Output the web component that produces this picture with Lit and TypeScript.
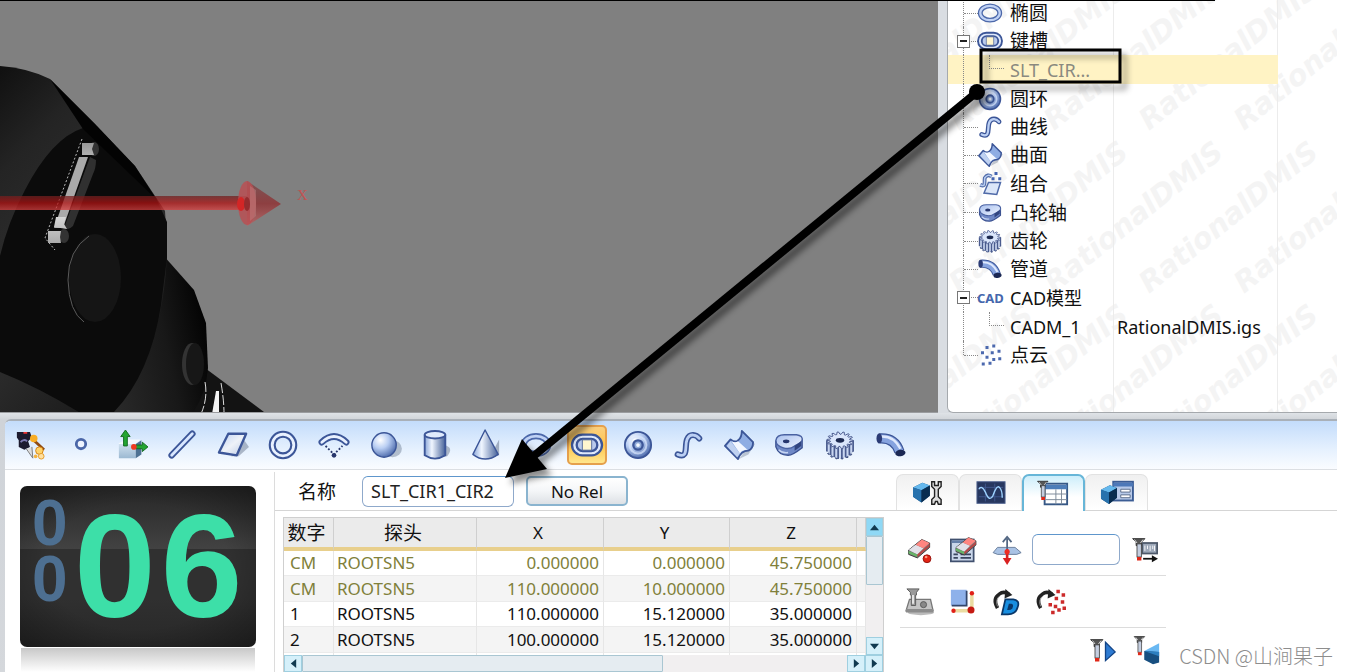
import { LitElement, html, svg, css } from "lit";
import { customElement, state } from "lit/decorators.js";
import { classMap } from "lit/directives/class-map.js";

const cog = (cx: number, cy: number) =>
  "M" + Array.from({ length: 56 }, (_, i) => {
    const a = (i / 56) * Math.PI * 2;
    const far = i % 4 < 2;
    return `${(cx + Math.cos(a) * (far ? 14 : 10.5)).toFixed(1)} ${(cy + Math.sin(a) * (far ? 9 : 6.5)).toFixed(1)}`;
  }).join("L") + "Z";

const probe = svg`<path d="M3 3H17L13 7V11H7V7Z" fill="#555" stroke="#222"/><path d="M5 4L8 8M15 4L12 8" stroke="#eee"/><rect x="8" y="9" width="5" height="15" fill="#c4cee0" stroke="#444"/><rect x="8" y="24" width="5" height="4" fill="#e02818"/>`;
const eraser = svg`<path d="M3 17L18 5L27 9V14L13 26L3 22Z" fill="#777" stroke="#333"/><path d="M3 17L11 11L20 15L13 22Z" fill="#e2e0e8"/><path d="M11 11L18 5L27 9L20 15Z" fill="#ff8580"/><path d="M3 18L13 22V25L3 21Z" fill="#66b466"/><path d="M13 22L27 10V13L13 25Z" fill="#b44"/>`;
const cube = svg`<path d="M2 10L12 5L20 8V19L11 26L2 20Z" fill="#174d7c"/><path d="M2 10L12 5L20 8L11 13Z" fill="#65b8ed"/><path d="M2 10L11 13V26L2 20Z" fill="#2872ad"/><path d="M11 13L20 8V19L11 26Z" fill="#092d50"/>`;
const turn = svg`<path d="M6 24Q0 13 8 8Q13 4 19 8" fill="none" stroke="#222" stroke-width="4"/><path d="M15 2L23 9L14 13Z" fill="#222"/><path d="M6 22Q3 14 9 10" fill="none" stroke="#999" stroke-width="1"/>`;

const icons: Record<string, unknown> = {
  probeSetup: svg`<path d="M2 2H16L18 8L14 12L16 18L10 21L4 18V11L2 8Z" fill="#1c1b2f"/><path d="M9 3H13" stroke="#e33" stroke-width="2"/><path d="M6 13Q9 9 13 12" stroke="#7b79b0" fill="none" stroke-width="2"/><path d="M12 20L19 30L18 18" fill="#ddd" stroke="#777"/><path d="M18 9L31 21" stroke="#8f4b12" stroke-width="3"/><circle cx="20" cy="9" r="4" fill="#f8ad25"/><circle cx="26" cy="22" r="4" fill="#ffd36a" stroke="#d58210"/><circle cx="28" cy="28" r="3" fill="#ffe0a0" stroke="#e39a26"/><circle cx="22" cy="28" r="2" fill="#f4b33f"/>`,
  point: svg`<circle cx="16" cy="15" r="5" fill="#eef4ff" stroke="#4a66a8" stroke-width="3"/>`,
  edgePoint: svg`<path d="M2 14L10 10H25L20 15H2Z" fill="#f4f8fc"/><path d="M2 15H20V30H2Z" fill="url(#box)"/><path d="M20 15L26 11V26L20 30Z" fill="#4f7293"/><path d="M9 0L14 7H11V17H7V7H4Z" fill="#23a531" stroke="#116a20"/><path d="M33 18L27 23V20H20V16H27V13Z" fill="#23a531" stroke="#116a20"/><circle cx="18" cy="18" r="3" fill="#f03a20"/>`,
  line: svg`<path d="M5 27L27 4" stroke="#3c5698" stroke-width="7" stroke-linecap="round"/><path d="M5 27L27 4" stroke="#d9e7ff" stroke-width="3" stroke-linecap="round"/>`,
  plane: svg`<path d="M28 11L33 18L22 28H14Z" fill="#5f6d85" opacity=".45"/><path d="M11 4H30L20 27L1 24Z" fill="url(#sheet)" stroke="#3c5698" stroke-width="2.500" stroke-linejoin="round"/>`,
  circle: svg`<circle cx="16" cy="16" r="11.500" fill="none" stroke="#3c5698" stroke-width="7.500"/><circle cx="16" cy="16" r="11.500" fill="none" stroke="#e9f1ff" stroke-width="3"/>`,
  arc: svg`<path d="M3 13Q16 1 29 13" fill="none" stroke="#3c5698" stroke-width="7" stroke-linecap="round"/><path d="M3 13Q16 1 29 13" fill="none" stroke="#e9f1ff" stroke-width="3" stroke-linecap="round"/><path d="M7 17L16 26L25 17" fill="none" stroke="#27366b" stroke-width="2" stroke-dasharray="2 2"/><circle cx="16" cy="27" r="2.500" fill="#27366b"/>`,
  sphere: svg`<ellipse cx="24" cy="20" rx="10" ry="9" fill="#5f6d85" opacity=".4"/><circle cx="15" cy="16" r="13" fill="url(#ball)" stroke="#3c5698" stroke-width="1.500"/>`,
  cylinder: svg`<path d="M25 16Q37 18 29 28L18 30Z" fill="#5f6d85" opacity=".45"/><path d="M5 5V27Q16 34 27 27V5" fill="url(#tube)" stroke="#3c5698" stroke-width="2"/><ellipse cx="16" cy="5" rx="11" ry="4" fill="#dfeafc" stroke="#3c5698" stroke-width="2"/>`,
  cone: svg`<path d="M30 10V27L20 29Z" fill="#5f6d85" opacity=".5"/><path d="M15 0L29 26Q15 36 2 26Z" fill="url(#tube)" stroke="#3c5698" stroke-width="1.500" stroke-linejoin="round"/>`,
  ellipse: svg`<ellipse cx="16" cy="16" rx="13" ry="9.500" fill="none" stroke="#4c68aa" stroke-width="6.500"/><ellipse cx="16" cy="16" rx="13" ry="9.500" fill="none" stroke="#c0d2f5" stroke-width="3"/>`,
  slot: svg`<rect x="0" y="5" width="32" height="22" rx="11" fill="#dfe9fb" stroke="#3c5698" stroke-width="2.500"/><rect x="5" y="9.500" width="22" height="13" rx="6.500" fill="#b9caec" stroke="#3c5698" stroke-width="2.500"/><rect x="11" y="10.500" width="10" height="11" fill="#fff6cf" stroke="#53699c"/>`,
  torus: svg`<circle cx="16" cy="16" r="14" fill="url(#ball)" stroke="#3c5698" stroke-width="2"/><circle cx="16" cy="16" r="9" fill="none" stroke="#d9e6fc" stroke-width="2" opacity=".7"/><circle cx="16" cy="16" r="5" fill="#8fa9d8" stroke="#3c5698" stroke-width="2.500"/><circle cx="16" cy="16" r="2" fill="#f3f8ff"/>`,
  curve: svg`<path d="M5 26C17 31 12 17 15 10C18 3 25 5 28 9" fill="none" stroke="#3c5698" stroke-width="6.500" stroke-linecap="round"/><path d="M5 26C17 31 12 17 15 10C18 3 25 5 28 9" fill="none" stroke="#bcd0f4" stroke-width="3" stroke-linecap="round"/>`,
  surface: svg`<path d="M26 26L33 15L30 12L16 31Z" fill="#5f6d85" opacity=".35"/><path d="M1 17L7 10Q12 14 15 11Q19 8 19 1L31 13Q31 20 26 22Q18 22 15 31Z" fill="#8fadE3" stroke="#3c5698" stroke-width="2" stroke-linejoin="round"/><path d="M8 12Q12 14 15 12L25 21Q19 21 17 25Z" fill="#f3f7ff"/><path d="M3 17L7 12L17 25L14 29Z" fill="#bfd1f1"/>`,
  group: svg`<path d="M3 17C11 21 8 13 9 8Q13 2 18 6" fill="none" stroke="#4f6aa8" stroke-width="5"/><path d="M3 17C11 21 8 13 9 8Q13 2 18 6" fill="none" stroke="#b9cdf0" stroke-width="2"/><path d="M14 14H30L25 30L8 28Z" fill="#dbe6f8" stroke="#4f6aa8" stroke-width="2"/><path d="M22 0H26V4H22ZM18 7H22V11H18ZM27 7H31V11H27Z" fill="#4363b0"/>`,
  cam: svg`<path d="M2 12V18Q5 27 15 27Q20 27 30 19V10Z" fill="#6f88c6" stroke="#3c5291" stroke-width="1.500"/><path d="M2 11Q3 5 11 5H24Q31 6 30 11Q29 14 22 17Q17 21 10 19Q2 17 2 11Z" fill="url(#face)" stroke="#4a62a2" stroke-width="1.500"/><path d="M5 21Q9 25 15 24" stroke="#c5d4f2" stroke-width="1.500" fill="none"/><path d="M22 22L29 17V12L22 17Z" fill="#32457f"/><ellipse cx="13" cy="12" rx="3.500" ry="2" fill="#26366f"/>`,
  gear: svg`<path d=${cog(16, 22)} fill="#6f86be" stroke="#3b4a75"/><path d="M2 11H30V22Q24 30 16 30Q8 30 2 22Z" fill="#c9d6f0"/><path d="M2 11V23M6 15V27M10 17V29M14 18V31M18 18V31M22 17V29M26 15V27M30 11V23" stroke="#4a5b8e" stroke-width="1.800"/><path d=${cog(16, 11)} fill="#dbe6fb" stroke="#44548a"/><ellipse cx="16" cy="11" rx="4.500" ry="2.500" fill="#1c2950"/>`,
  pipe: svg`<path d="M4 9Q20 8 25 23" fill="none" stroke="#3c5698" stroke-width="11"/><path d="M4 9Q20 8 25 23" fill="none" stroke="#86a3df" stroke-width="8.500"/><path d="M5 7Q19 6 26 20" fill="none" stroke="#dfe9fd" stroke-width="2.500"/><ellipse cx="3.500" cy="9" rx="3" ry="5.500" fill="#2b3b75"/><ellipse cx="26" cy="24.500" rx="5.500" ry="3.500" fill="#1b2854" transform="rotate(-8 26 24.500)"/>`,
  cloud: svg`<path d="M10 4h4v4h-4zM19 2h4v4h-4zM4 11h4v4h-4zM17 11h4v4h-4zM26 9h4v4h-4zM10 17h4v4h-4zM19 20h4v4h-4zM27 19h4v4h-4zM5 26h4v4h-4zM14 25h4v4h-4z" fill="#4c69ae"/>`,
  cubeWrench: svg`<g transform="translate(-2 0)">${cube}</g><path d="M20 4V9L23 12V20L20 23V28H23L24 25H26L27 28H30V23L27 20V12L30 9V4H27V8H23V4Z" fill="#ddd" stroke="#222" stroke-width="1.500"/>`,
  wave: svg`<rect x="1" y="4" width="30" height="23" fill="#27375f" stroke="#4e628f"/><path d="M3 10H29M3 20H29M10 6V25M20 6V25" stroke="#40578d"/><path d="M3 12Q6 7 10 15Q14 26 18 19Q22 7 25 10Q28 13 28 21" fill="none" stroke="#9fd3ff" stroke-width="1.500"/>`,
  probeTable: svg`<rect x="6" y="5" width="24" height="22" fill="#fff" stroke="#365785" stroke-width="2"/><path d="M6 6H30V11H6Z" fill="#4d7db8"/><path d="M7 16H30M7 22H30M18 11V27M24 11V27" stroke="#7b8796"/><g transform="translate(-4 0) scale(.8)">${probe}</g>`,
  cubeForm: svg`<rect x="12" y="4" width="21" height="20" fill="#b7c9e9" stroke="#3b5c94" stroke-width="2"/><path d="M12 5H33V9H12Z" fill="#4d78b8"/><path d="M20 12H30V15H20ZM20 18H30V21H20Z" fill="#fff" stroke="#596b88"/><g transform="translate(-3 3) scale(.95)">${cube}</g>`,
  eraseOne: svg`<g transform="translate(0 -1)">${eraser}</g><circle cx="24" cy="26" r="4.500" fill="#e32414" stroke="#8e0d08"/><circle cx="23" cy="24" r="1.500" fill="#ff9b82"/>`,
  eraseAll: svg`<rect x="1" y="4" width="26" height="25" fill="#c9d6ea" stroke="#40506e" stroke-width="2"/><path d="M2 5H26V8H2Z" fill="#6680aa"/><path d="M4 21H9M12 21H24M4 25H9M12 25H24" stroke="#39455e" stroke-width="2"/><g transform="translate(4 -3) scale(.95)">${eraser}</g>`,
  planeShift: svg`<path d="M-1 19L4 13H24L31 19L26 21H4Z" fill="#a9c2e4" stroke="#5f7594"/><path d="M15 16V3M10 7L15 1L20 7" fill="none" stroke="#536783" stroke-width="2"/><path d="M15 15V28" stroke="#d92020" stroke-width="3"/><path d="M10 25H20L15 33Z" fill="#d92020"/><circle cx="15" cy="18" r="3" fill="#ed2d23"/>`,
  probeRuler: svg`<rect x="14" y="8" width="17" height="12" fill="#9da8b9" stroke="#4d5869" stroke-width="2"/><path d="M17 11V17M20 11V15M23 11V17M26 11V15M28 11V17" stroke="#fff"/><path d="M15 26H27" stroke="#111" stroke-width="2"/><path d="M25 22L32 26L25 30Z" fill="#111"/>${probe}`,
  probeBlock: svg`<ellipse cx="17" cy="28" rx="15" ry="3" fill="#bbb"/><path d="M4 13H28L31 26H0Z" fill="#c4c4c4" stroke="#777" stroke-width="1.500"/><path d="M0 24H31V28H0Z" fill="#8c8c8c"/><circle cx="20" cy="19" r="3.500" fill="#888" stroke="#555"/><path d="M1 1H15L12 5V8H11V20H6V8H5V5Z" fill="#999" stroke="#555"/><path d="M8 8V18" stroke="#eee" stroke-width="2"/>`,
  corner: svg`<rect x="1" y="2" width="18" height="18" fill="#8eb1ea"/><path d="M19 3V20H2" fill="none" stroke="#33466b" stroke-width="2"/><path d="M25 6V26H4" fill="none" stroke="#eadca2" stroke-width="4"/><circle cx="25" cy="6" r="2.500" fill="#e02018"/><circle cx="4" cy="26" r="2.500" fill="#e02018"/><circle cx="24" cy="25" r="4" fill="#c51a12"/>`,
  turnDatum: svg`<g transform="translate(-2 -1)">${turn}</g><path d="M13 13H22Q30 14 27 22Q25 30 16 30H9Z" fill="#188ee0" stroke="#0a3768" stroke-width="2"/><path d="M17 18H20Q23 19 21 23Q19 26 15 25Z" fill="#0a3768"/>`,
  turnPoints: svg`<g transform="translate(-3 -1)">${turn}</g><path d="M21 2h4v4h-4zM27 6h4v4h-4zM19 10h4v4h-4zM12 17h4v4h-4zM26 14h4v4h-4zM18 19h4v4h-4zM28 21h4v4h-4zM15 26h4v4h-4zM22 23h4v4h-4z" fill="#cc2a2a"/>`,
  probePlay: svg`${probe}<path d="M20 6L31 17L20 27Z" fill="#2e7bd2" stroke="#124486" stroke-width="1.500"/>`,
  probeCube: svg`<g transform="translate(0 -3) scale(.85)">${probe}</g><path d="M14 16L31 7V17L22 20Z" fill="#69b8f2"/><path d="M14 16L31 17V29L24 31L14 26Z" fill="#174f80"/><path d="M14 16L31 17V22Z" fill="#2c7fc0"/>`,
};

const icon = (name: string, cls = "icon") =>
  html`<svg class=${cls} viewBox="0 0 32 32" aria-hidden="true">${icons[name]}</svg>`;

interface Node { label: string; icon?: string; open?: boolean; child?: boolean; value?: string; cad?: boolean; selected?: boolean; last?: boolean }

const nodes: Node[] = [
  { label: "椭圆", icon: "ellipse" },
  { label: "键槽", icon: "slot", open: true },
  { label: "SLT_CIR...", child: true, selected: true },
  { label: "圆环", icon: "torus" },
  { label: "曲线", icon: "curve" },
  { label: "曲面", icon: "surface" },
  { label: "组合", icon: "group" },
  { label: "凸轮轴", icon: "cam" },
  { label: "齿轮", icon: "gear" },
  { label: "管道", icon: "pipe" },
  { label: "CAD模型", cad: true, open: true },
  { label: "CADM_1", child: true, value: "RationalDMIS.igs" },
  { label: "点云", icon: "cloud", last: true },
];

const features = [
  ["probeSetup", "测头"], ["point", "点"], ["edgePoint", "边界点"], ["line", "直线"], ["plane", "平面"],
  ["circle", "圆"], ["arc", "圆弧"], ["sphere", "球"], ["cylinder", "圆柱"], ["cone", "圆锥"],
  ["ellipse", "椭圆"], ["slot", "键槽"], ["torus", "圆环"], ["curve", "曲线"], ["surface", "曲面"],
  ["cam", "凸轮轴"], ["gear", "齿轮"], ["pipe", "管道"],
];

const rows = [
  ["CM", "ROOTSN5", "0.000000", "0.000000", "45.750000"],
  ["CM", "ROOTSN5", "110.000000", "10.000000", "45.750000"],
  ["1", "ROOTSN5", "110.000000", "15.120000", "35.000000"],
  ["2", "ROOTSN5", "100.000000", "15.120000", "35.000000"],
  ["", "", "", "", ""],
];

const marks = [131, 294, 457].flatMap((y) => [-2, -1, 0, 1, 2].map((k) => [106 + k * 95, y]));

@customElement("app-root")
export class AppRoot extends LitElement {
  @state() private feature = "slot";
  @state() private tab = "probeTable";

  static styles = css`
    :host {
      display: flex; flex-direction: column; position: relative; min-height: 100vh; overflow: hidden;
      background: #fff; color: #111;
      font-family: "Noto Sans", "Noto Sans CJK SC", sans-serif; font-size: 17px;
    }
    * { box-sizing: border-box; }
    button { font: inherit; color: inherit; border: 0; padding: 0; background: none; display: grid; place-items: center; cursor: pointer; }
    .defs { position: absolute; width: 0; height: 0; }
    .icon { width: 30px; height: 30px; overflow: visible; }
    .top { display: flex; flex: 1; min-height: 413px; margin-right: 10px; background: #d9dde2; }
    .scene { flex: 1; background: #808080; display: block; min-width: 0; height: auto; border-bottom: 1px solid #9a9c9f; }
    .axis { font: 15px "Liberation Serif", serif; fill: #c25353; }
    .panel { position: relative; flex: none; width: 390px; margin-left: 9px; background: #fff; border-left: 1px solid #a5a9ad; border-bottom: 1px solid #a5a9ad; border-bottom-left-radius: 6px; overflow: hidden; }
    .marks { position: absolute; inset: 0; width: 100%; height: 100%; }
    .marks text { font: italic bold 29px "DejaVu Sans", sans-serif; fill: #f4f4f4; }
    .cols { position: absolute; inset: 0; display: grid; grid-template-columns: 166px 164px 1fr; }
    .cols i { border-right: 1px solid #ececec; }
    .cols i:last-child { border: 0; }
    .tree { position: relative; margin: -1px 0 0; padding: 0; list-style: none; display: grid; grid-auto-rows: 28px 28px 29px 29px; font-size: 18px; }
    .node { display: grid; grid-template-columns: 16px 14px 30px 1fr; width: 330px; align-items: center; white-space: nowrap; }
    .node.selected { background: #fff3c4; color: #8a8a80; }
    .rail { align-self: stretch; border-right: 1px dotted #888; }
    .last .rail { height: 14px; align-self: start; }
    .stem { border-top: 1px dotted #888; }
    .child .stem { visibility: hidden; }
    .node .icon { width: 24px; height: 24px; }
    .elbow { width: 15px; height: 14px; margin-left: 11px; align-self: start; border-left: 1px dotted #888; border-bottom: 1px dotted #888; }
    .fold { position: relative; z-index: 1; width: 13px; height: 13px; margin: 0 -7px 0 9px; border: 1px solid #777; background: #fff; }
    .fold::before { content: ""; width: 7px; height: 2px; background: #222; }
    .open .rail, .open .fold { grid-area: 1 / 1; }
    .cad { font: bold 16px "Open Sans", sans-serif; font-stretch: 75%; font-family: "Noto Sans", sans-serif; font-size: 13px; margin-left: -1px; color: #4567ad; }
    .text { display: grid; grid-template-columns: 107px 1fr; line-height: 24px; padding-left: 2px; }
    .zh { font-size: 19px; }
    .bottom { padding: 6px 10px 0 0; background: linear-gradient(#dfe3e7, #cfd3d8 7px, #d5d8dc); background-size: calc(100% - 10px) 100%; background-repeat: no-repeat; }
    .work { margin-left: 5px; border-top: 2px solid #a9b0b8; border-top-left-radius: 6px; background: #fff; overflow: hidden; }
    .tools { border-bottom: 1px solid #dcdfe3; background: linear-gradient(#c3dcfb, #e6f1fe 60%, #fafcff); }
    .toolgrid { display: grid; grid-template-columns: repeat(18, 1fr); max-width: 911px; height: 48px; place-items: center; }
    .tool { width: 40px; height: 40px; border-radius: 5px; border: 1px solid transparent; }
    .tool.on { border: 2px solid #e5a04c; background: linear-gradient(#fbd080, #ffc54c 50%, #ffe68d); }
    .body { display: grid; grid-template-columns: 270px 608px 1fr; }
    .left { padding: 14px 18px 0 15px; border-right: 1px solid #dcdcdc; margin-top: 2px; }
    .clock { display: flex; height: 161px; padding-left: 12px; overflow: hidden; border-radius: 7px; font-family: "Liberation Sans", sans-serif; font-weight: bold; background: radial-gradient(ellipse at center, transparent 55%, #0007 115%), linear-gradient(#262626, #424242 39%, #303030 39%, #303030 70%, #282828); }
    .small { width: 42px; font-size: 64px; line-height: 56px; color: #4d6f91; padding-top: 9px; }
    .small span, .big span { display: block; }
    .big { display: flex; gap: 5px; font-size: 147px; line-height: 161px; color: #3ddfa8; }
    .shade { height: 24px; margin: 1px 1px 0; background: linear-gradient(#c8c8c8, #fff); }
    .name { display: flex; align-items: center; height: 41px; padding: 2px 0 0 23px; border-bottom: 1px solid #d5d5d5; }
    .name label { width: 64px; font-size: 19px; }
    .field { border: 1px solid #8fa9cb; border-top-color: #5e96cc; border-radius: 6px; background: #fff; font: inherit; color: #222; outline: 0; min-width: 0; }
    .name .field { width: 152px; height: 31px; padding: 0 8px; font-size: 18px; }
    .rel { margin-left: 12px; width: 102px; height: 30px; border: 2px solid #8ab4cf; border-radius: 5px; background: linear-gradient(#fff, #f4f6f8 50%, #dde1e5); }
    .grid { display: grid; grid-template-columns: 1fr 17px; margin: 6px 0 0 8px; width: 601px; border: 1px solid #cfcfcf; border-bottom: 0; }
    .view { height: 137px; overflow: hidden; }
    table { width: 100%; table-layout: fixed; border-collapse: separate; border-spacing: 0; line-height: 22px; }
    th { height: 33px; padding: 0 4px 0 0; font-weight: normal; background: #ebebeb; border-right: 1px solid #cfcfcf; border-bottom: 4px solid #e8cf8c; }
    td { height: 25px; padding: 0 4px 0 3px; border-right: 1px solid #e6e6e6; border-bottom: 1px solid #ebebeb; }
    td:first-child { padding-left: 6px; }
    tr:nth-child(even) td { height: 26px; background: #f4f4f4; }
    .cm { color: #80803a; }
    .num { text-align: right; }
    .vbar { display: grid; grid-template-rows: 18px 49px 1fr 18px; background: #f1eff0; }
    .hbar { grid-column: 1 / -1; display: grid; grid-template-columns: 18px 361px 1fr 18px 18px; height: 17px; background: #f1eff0; }
    .thumb { border: 1px solid #a9c6d2; background: #e5ecf1; border-radius: 1px; }
    .arrow { border: 1px solid #9fcfe0; background: #d5f0fa; }
    .arrow.hot { background: #8fd8f5; }
    .arrow svg { width: 9px; height: 9px; fill: #103a50; }
    .tabs { display: flex; align-items: end; height: 41px; padding: 0 0 0 13px; border-bottom: 1px solid #d5d5d5; }
    .tab { width: 63px; height: 36px; border: 1px solid #e2e2e2; border-bottom: 0; border-radius: 7px 7px 0 0; background: linear-gradient(#f0f0f0, #fff); }
    .tab.on { height: 37px; margin-bottom: -1px; border: 2px solid #67b6d8; border-bottom: 0; background: linear-gradient(#cdeefb, #fff 60%); }
    .acts { width: 266px; margin-left: 17px; }
    .line { display: flex; align-items: center; gap: 4px; height: 52px; border-bottom: 1px solid #dcdcdc; }
    .line:first-child { height: 65px; padding-top: 13px; }
    .line:last-child { justify-content: end; border: 0; height: 46px; }
    .act { width: 40px; height: 40px; flex: none; }
    .act .icon { width: 28px; height: 28px; }
    .line .field { width: 88px; height: 31px; flex: none; }
    .note { position: absolute; inset: 0; width: 100%; height: 100%; pointer-events: none; }
    .credit { position: absolute; right: 14px; bottom: 4px; font: 20px/28px "Noto Sans CJK SC", sans-serif; font-weight: 300; color: #8d8d8d; }
  `;

  private defs() {
    return html`<svg class="defs" aria-hidden="true"><defs>
      <linearGradient id="tube"><stop offset="0" stop-color="#8aa6d8"/><stop offset=".35" stop-color="#f0f6ff"/><stop offset="1" stop-color="#466299"/></linearGradient>
      <linearGradient id="sheet" x2="1" y2="1"><stop offset="0" stop-color="#bcd0f3"/><stop offset=".5" stop-color="#eef2f8"/><stop offset="1" stop-color="#b9c9e6"/></linearGradient>
      <linearGradient id="face" x2="1" y2="1"><stop offset="0" stop-color="#a9c0ee"/><stop offset="1" stop-color="#eef4ff"/></linearGradient>
      <linearGradient id="box" x2="0" y2="1"><stop offset="0" stop-color="#cfe0ee"/><stop offset="1" stop-color="#9cb9d2"/></linearGradient>
      <radialGradient id="ball" cx=".35" cy=".3" r=".75"><stop offset="0" stop-color="#fff"/><stop offset=".45" stop-color="#b9cef3"/><stop offset="1" stop-color="#4a68aa"/></radialGradient>
    </defs></svg>`;
  }

  private scene() {
    return html`<svg class="scene" role="img" aria-label="CAD">
      <defs>
        <linearGradient id="hull" x1="0" y1="0" x2=".5" y2="1"><stop offset="0" stop-color="#101010"/><stop offset=".25" stop-color="#242424"/><stop offset=".6" stop-color="#303030"/><stop offset="1" stop-color="#1c1c1c"/></linearGradient>
        <linearGradient id="hub" x1="0" y1=".7" x2="1" y2=".4"><stop offset="0" stop-color="#2b2b2b"/><stop offset=".6" stop-color="#181818"/><stop offset="1" stop-color="#020202"/></linearGradient>
        <linearGradient id="shaft" x2="0" y2="1"><stop offset="0" stop-color="#702020" stop-opacity=".75"/><stop offset=".5" stop-color="#b01212" stop-opacity=".75"/><stop offset="1" stop-color="#d64040" stop-opacity=".75"/></linearGradient>
        <linearGradient id="tip" x2="0" y2="1"><stop offset="0" stop-color="#7c5555"/><stop offset=".5" stop-color="#8d3f41"/><stop offset="1" stop-color="#b06a6a"/></linearGradient>
        <linearGradient id="pin" x2="0" y2="1"><stop offset="0" stop-color="#999"/><stop offset=".5" stop-color="#fff"/><stop offset="1" stop-color="#aaa"/></linearGradient>
      </defs>
      <path d="M205 368L264 412V414H190Z" fill="#131313"/>
      <path d="M163 255L194 290L206 323L208 368Q206 395 192 414H100Z" fill="url(#hub)"/>
      <path d="M205 382Q208 398 201 414M221 383Q224 400 224 414" stroke="#ddd" stroke-dasharray="10 2" fill="none"/>
      <path d="M216 391H219V414H212Z" fill="#f4f4f4"/>
      <path d="M0 66Q28 68 50 79L95 124L135 166L155 196L165 211L167 245Q166 350 112 414H0Z" fill="url(#hull)"/>
      <path d="M83 128Q52 138 25 190Q8 222 0 256V372Q40 388 82 414H112Q150 376 161 305L167 258V222L156 198Z" fill="#0b0b0b"/>
      <path d="M50 79L95 124L135 166L157 200L83 129Z" fill="#030303"/>
      <ellipse cx="95" cy="278" rx="26" ry="44" fill="#151515"/>
      <path d="M89 236Q68 250 68 280Q69 312 84 322" stroke="#5a5a5a" fill="none"/>
      <ellipse cx="192" cy="364" rx="10" ry="21" fill="#333"/><ellipse cx="195" cy="364" rx="9" ry="21" fill="#171717"/>
      <path d="M90 157L96 160Q96 168 93 174L73 226Q68 231 64 228Z" fill="#303030"/>
      <path d="M79 157H88L63 228H54Z" fill="#aaa"/>
      <path d="M82 139L45 238L55 250" stroke="#bbb" stroke-dasharray="2 2" fill="none"/>
      <ellipse cx="94" cy="149" rx="5" ry="7" fill="#333"/><ellipse cx="64" cy="236" rx="5" ry="7" fill="#333"/>
      <path d="M82 143H94L92 149L94 155H82ZM56 217H66L64 224L67 229L54 227ZM48 231H61L60 237L61 243H48Z" fill="url(#pin)"/>
      <rect y="196" width="248" height="14" fill="url(#shaft)"/>
      <path d="M247 181L281 204L247 226Z" fill="url(#tip)"/>
      <ellipse cx="247" cy="203" rx="9" ry="22" fill="#b85053" opacity=".85"/>
      <path d="M250 186L256 190V216L250 221Z" fill="#b98080" opacity=".5"/>
      <ellipse cx="241" cy="204" rx="4" ry="7" fill="#d32626"/><ellipse cx="247" cy="204" rx="3" ry="7" fill="#942c2e"/>
      <text class="axis" x="297" y="200">X</text>
    </svg>`;
  }

  private node(n: Node) {
    const zh = /^[\u4e00-\u9fff]/.test(n.label);
    return html`<li class=${classMap({ node: true, open: !!n.open, child: !!n.child, selected: !!n.selected, last: !!n.last })}>
      <span class="rail"></span>${n.open ? html`<button class="fold" aria-label="折叠"></button>` : ""}<span class="stem"></span>
      ${n.child ? html`<span class="elbow"></span>` : n.cad ? html`<span class="cad">CAD</span>` : icon(n.icon!)}
      <span class="text"><span class=${zh ? "zh" : ""}>${n.label}</span>${n.value ? html`<span>${n.value}</span>` : ""}</span>
    </li>`;
  }

  private arrow(d: string, label: string, hot = false) {
    return html`<button class=${classMap({ arrow: true, hot })} aria-label=${label}><svg viewBox="0 0 10 10"><path d=${d}/></svg></button>`;
  }

  private act(name: string, label: string) {
    return html`<button class="act" aria-label=${label}>${icon(name)}</button>`;
  }

  render() {
    return html`${this.defs()}
      <main class="top">
        ${this.scene()}
        <section class="panel">
          <svg class="marks" aria-hidden="true">${marks.map(([x, y]) => svg`<text transform="translate(${x} ${y}) rotate(-39)">RationalDMIS</text>`)}</svg>
          <div class="cols"><i></i><i></i><i></i></div>
          <ul class="tree">${nodes.map((n) => this.node(n))}</ul>
        </section>
      </main>
      <section class="bottom"><div class="work">
        <nav class="tools"><div class="toolgrid">
          ${features.map(([id, label]) => html`<button class=${classMap({ tool: true, on: id === this.feature })} aria-label=${label} @click=${() => (this.feature = id)}>${icon(id)}</button>`)}
        </div></nav>
        <div class="body">
          <div class="left">
            <div class="clock">
              <div class="small"><span>0</span><span>0</span></div>
              <div class="big"><span>0</span><span>6</span></div>
            </div>
            <div class="shade"></div>
          </div>
          <div class="mid">
            <div class="name"><label for="fname">名称</label><input id="fname" class="field" value="SLT_CIR1_CIR2"><button class="rel">No Rel</button></div>
            <div class="grid">
              <div class="view"><table>
                <colgroup><col width="50"><col width="143"><col width="127"><col width="126"><col width="127"><col></colgroup>
                <thead><tr><th class="zh">数字</th><th class="zh">探头</th><th>X</th><th>Y</th><th>Z</th><th></th></tr></thead>
                <tbody>${rows.map((r) => html`<tr class=${r[0] === "CM" ? "cm" : ""}>${r.map((c, i) => html`<td class=${i > 1 ? "num" : ""}>${c}</td>`)}<td></td></tr>`)}</tbody>
              </table></div>
              <div class="vbar">${this.arrow("M0 8L5 2L10 8Z", "上", true)}<span class="thumb"></span><span></span>${this.arrow("M0 2L5 8L10 2Z", "下")}</div>
              <div class="hbar">${this.arrow("M8 0L2 5L8 10Z", "左")}<span class="thumb"></span><span></span>${this.arrow("M2 0L8 5L2 10Z", "右")}${this.arrow("M2 0L8 5L2 10Z", "末尾")}</div>
            </div>
          </div>
          <div class="right">
            <div class="tabs">${["cubeWrench", "wave", "probeTable", "cubeForm"].map((t) => html`<button class=${classMap({ tab: true, on: t === this.tab })} aria-label=${t} @click=${() => (this.tab = t)}>${icon(t)}</button>`)}</div>
            <div class="acts">
              <div class="line">${this.act("eraseOne", "删除点")}${this.act("eraseAll", "全部删除")}${this.act("planeShift", "平面偏移")}<input class="field" aria-label="距离">${this.act("probeRuler", "测量距离")}</div>
              <div class="line">${this.act("probeBlock", "测头")}${this.act("corner", "角点")}${this.act("turnDatum", "旋转基准")}${this.act("turnPoints", "旋转点")}</div>
              <div class="line">${this.act("probePlay", "运行")}${this.act("probeCube", "模型测量")}</div>
            </div>
          </div>
        </div>
      </div></section>
      <svg class="note" aria-hidden="true">
        <defs><filter id="drop" x="-20%" y="-20%" width="150%" height="150%"><feDropShadow dx="5" dy="6" stdDeviation="3" flood-opacity=".45"/></filter></defs>
        <path d="M0 0H1215" stroke="#000" stroke-width="2"/>
        <g filter="url(#drop)">
          <rect x="981" y="50" width="139" height="32" fill="none" stroke="#000" stroke-width="3"/>
          <path d="M977 92L530 459" stroke="#000" stroke-width="8"/>
          <circle cx="977" cy="92" r="8"/>
          <path d="M505 478L522 439L547 469Z"/>
        </g>
      </svg>
      <div class="credit">CSDN @山涧果子</div>`;
  }
}
